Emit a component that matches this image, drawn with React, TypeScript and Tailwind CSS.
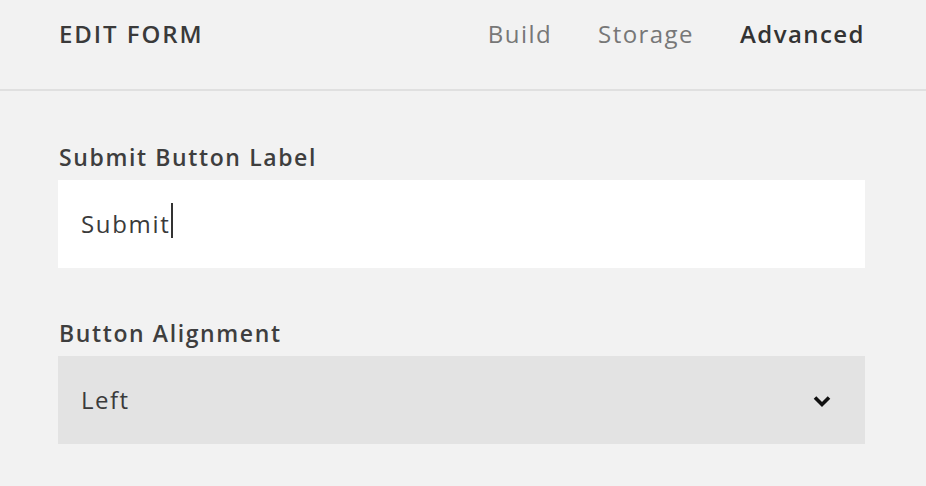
export default function App() {
  return (
    <div className="w-[926px] h-[486px] bg-[#f2f2f2] overflow-hidden font-['Open_Sans',sans-serif] text-[#3e3e3e]">
      <div className="h-[91px] flex items-center justify-between pl-[59px] pr-[61px] pb-[21px] border-b-2 border-[#e0e0e0]">
        <h1 className="text-[24px] tracking-[0.08em] font-semibold text-[#3a3a3a]">EDIT FORM</h1>
        <nav className="flex gap-[46px] text-[24px] tracking-[0.06em]">
          <span className="text-[#777]">Build</span>
          <span className="text-[#777]">Storage</span>
          <span className="text-[#333] font-semibold">Advanced</span>
        </nav>
      </div>
      <div className="pl-[58px] pr-[61px] pt-[51px] flex flex-col">
        <label className="text-[23px] tracking-[0.07em] font-semibold ml-[1px] leading-[30px]">Submit Button Label</label>
        <div className="mt-[8px] h-[88px] bg-white flex items-center px-[23px]">
          <span className="text-[24px] tracking-[0.07em] text-[#3a3a3a]">Submit</span>
          <span className="w-[2px] h-[35px] bg-[#333] ml-[1px] mb-[7px]" />
        </div>
        <label className="mt-[50px] text-[23px] tracking-[0.07em] font-semibold ml-[1px] leading-[30px]">Button Alignment</label>
        <div className="mt-[8px] h-[88px] bg-[#e3e3e3] flex items-center justify-between pl-[23px] pr-[34px]">
          <span className="text-[24px] tracking-[0.06em] text-[#3a3a3a]">Left</span>
          <svg width="18" height="13" viewBox="0 0 18 13" fill="none" className="mt-[2px]">
            <polyline points="2,2.5 9,9.5 16,2.5" stroke="#111" strokeWidth="3.6" strokeLinecap="butt" strokeLinejoin="miter" />
          </svg>
        </div>
      </div>
    </div>
  );
}
